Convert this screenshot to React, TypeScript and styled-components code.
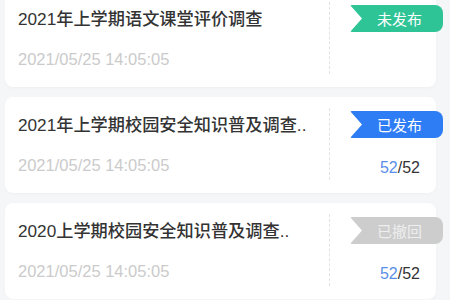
import styled, { createGlobalStyle } from 'styled-components';

const GlobalStyle = createGlobalStyle`
  html, body {
    margin: 0;
    padding: 0;
    background: #f5f6f8;
    font-family: 'Liberation Sans', 'Noto Sans CJK SC', sans-serif;
    overflow: hidden;
  }
`;

type Status = 'draft' | 'published' | 'revoked';

interface Survey {
  title: string;
  time: string;
  status: Status;
  done?: number;
  total?: number;
}

const surveys: Survey[] = [
  { title: '2021年上学期语文课堂评价调查', time: '2021/05/25 14:05:05', status: 'draft' },
  {
    title: '2021年上学期校园安全知识普及调查..',
    time: '2021/05/25 14:05:05',
    status: 'published',
    done: 52,
    total: 52,
  },
  {
    title: '2020上学期校园安全知识普及调查..',
    time: '2021/05/25 14:05:05',
    status: 'revoked',
    done: 52,
    total: 52,
  },
];

const statusText: Record<Status, string> = {
  draft: '未发布',
  published: '已发布',
  revoked: '已撤回',
};

const statusBg: Record<Status, string> = {
  draft: '#2fc496',
  published: '#2f7df5',
  revoked: '#cdcdcd',
};

const List = styled.div`
  display: flex;
  flex-direction: column;
  gap: 10px;
  margin-top: -9px;
  padding: 0 14px 0 5px;
`;

const Card = styled.div`
  display: flex;
  height: 96px;
  background: #fff;
  border-radius: 8px;
  box-shadow: 0 1px 3px rgba(0, 0, 0, 0.03);
`;

const Main = styled.div`
  flex: 1;
  min-width: 0;
  padding: 17px 0 0 13px;
`;

const Title = styled.div`
  font-size: 17.2px;
  line-height: 22px;
  font-weight: 500;
  color: #333;
  white-space: nowrap;
`;

const Time = styled.div`
  margin-top: 19px;
  font-size: 16.5px;
  line-height: 20px;
  color: #cbcbcb;
`;

const Side = styled.div`
  width: 106px;
  margin: 11px 0 13px;
  border-left: 1px dashed #e2e2e2;
  display: flex;
  flex-direction: column;
  align-items: flex-end;
`;

const Badge = styled.div<{ $status: Status }>`
  width: 93px;
  height: 27px;
  margin: 3px -7px 0 0;
  padding-left: 6px;
  box-sizing: border-box;
  display: flex;
  align-items: center;
  justify-content: center;
  font-size: 15px;
  color: ${(p) => (p.$status === 'revoked' ? '#eeeeee' : '#fff')};
  background: ${(p) => statusBg[p.$status]};
  border-radius: 2px 8px 8px 2px;
  clip-path: polygon(0 0, 100% 0, 100% 100%, 0 100%, 12px 50%);
`;

const Count = styled.div`
  margin-top: 20px;
  padding-right: 16px;
  font-size: 16px;
  line-height: 20px;
  color: #333;
`;

const Done = styled.span`
  color: #5a8fe8;
`;

export default function App() {
  return (
    <>
      <GlobalStyle />
      <List>
        {surveys.map((s, i) => (
          <Card key={i}>
            <Main>
              <Title>{s.title}</Title>
              <Time>{s.time}</Time>
            </Main>
            <Side>
              <Badge $status={s.status}>{statusText[s.status]}</Badge>
              {s.total !== undefined ? (
                <Count>
                  <Done>{s.done}</Done>/{s.total}
                </Count>
              ) : null}
            </Side>
          </Card>
        ))}
      </List>
    </>
  );
}
